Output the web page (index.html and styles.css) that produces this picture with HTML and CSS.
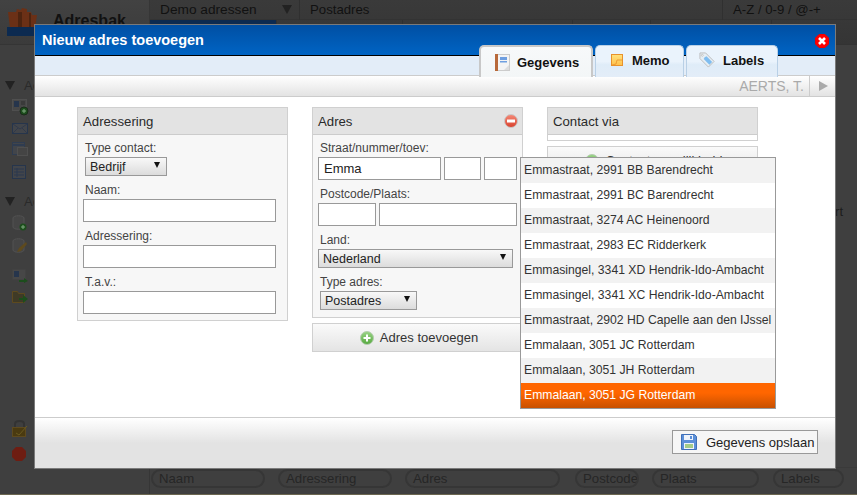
FILE: index.html
```html
<!DOCTYPE html>
<html lang="nl">
<head>
<meta charset="utf-8">
<title>Nieuw adres toevoegen</title>
<link rel="stylesheet" href="styles.css">
</head>
<body>
<div class="app">
  <aside class="side">
    <div class="brand">
      <svg class="logo" width="32" height="30" viewBox="0 0 32 30"><path fill="#6b3016" d="M1 5h8l1-3 4 1 1-2 5 1v3l4 0 1 3 5 0-2 13H3z"/><path fill="#4d2410" d="M11 5h4v15h-4zM22 6h2v14h-2z"/><rect y="20" x="0" width="32" height="9" fill="#0c2a50"/></svg>
      <span class="brand-name">Adresbak</span>
    </div>
    <div class="side-group first">
      <div class="side-title"><i class="tri"></i><span>Ac</span></div>
      <svg class="si" width="17" height="17" viewBox="0 0 17 17"><rect x=".5" y=".5" width="14" height="11" fill="#474747" stroke="#4f4f4f"/><rect x="2" y="2" width="5" height="6" fill="#26354c"/><path d="M9 3h4M9 5h4" stroke="#2f2f2f"/><circle cx="12" cy="12" r="4" fill="#1c4d1c" stroke="#1a2a1a"/><path d="M10 12h4M12 10v4" stroke="#7ea87e"/></svg>
      <svg class="si" width="17" height="12" viewBox="0 0 17 12"><rect x=".5" y=".5" width="15" height="10" fill="#42454a" stroke="#26354c"/><path d="M1 1l7 5 7-5M1 10l5-5M15 10l-5-5" stroke="#30394a" fill="none"/></svg>
      <svg class="si" width="17" height="16" viewBox="0 0 17 16"><rect x=".5" y=".5" width="12" height="12" fill="#42454a" stroke="#2f3c50"/><path d="M1 3h11" stroke="#2f3c50" stroke-width="2"/><rect x="5.500" y="5.500" width="10" height="8" fill="#444" stroke="#4f4f4f"/></svg>
      <svg class="si" width="14" height="15" viewBox="0 0 14 15"><rect x=".5" y=".5" width="13" height="13" fill="#42454a" stroke="#26354c"/><path d="M2 4h10M2 7h10M2 10h10M5 3v9" stroke="#2a384e"/></svg>
    </div>
    <div class="side-group">
      <div class="side-title"><i class="tri"></i><span>Ac</span></div>
      <svg class="si" width="15" height="16" viewBox="0 0 15 16"><path d="M1 3v9c0 3 11 3 11 0V3c0-3-11-3-11 0z" fill="#454545" stroke="#525252"/><circle cx="11" cy="12" r="3.500" fill="#1c4d1c"/><path d="M9 12h4M11 10v4" stroke="#7ea87e"/></svg>
      <svg class="si" width="16" height="16" viewBox="0 0 16 16"><path d="M1 3v9c0 3 11 3 11 0V3c0-3-11-3-11 0z" fill="#454545" stroke="#525252"/><path d="M5 14l2-4 7-6 1 2-6 7z" fill="#5e4a1e"/></svg>
      <svg class="si gap" width="16" height="14" viewBox="0 0 16 14"><rect x=".5" y=".5" width="13" height="10" fill="#474747"/><rect x="2" y="2" width="5" height="6" fill="#26354c"/><path d="M7 11h5V9l4 3-4 2v-1H7z" fill="#1c4d1c"/></svg>
      <svg class="si" width="16" height="15" viewBox="0 0 16 15"><path d="M.5 1.500h5l1 2h6v9H.5z" fill="#3f3a26" stroke="#5e4a1e"/><path d="M7 8h4V5l5 4-5 4v-3H7z" fill="#1c4d1c"/></svg>
    </div>
    <div class="side-foot">
      <svg class="si" width="16" height="17" viewBox="0 0 16 17"><path d="M3 7V4c0-4 9-4 9 0v3" fill="none" stroke="#333" stroke-width="2"/><rect x=".5" y="7.500" width="13" height="9" fill="#4a3a10" stroke="#5e4a1e"/><path d="M4 13l3 2 8-9" stroke="#6a5a20" fill="none"/></svg>
      <svg class="si" width="14" height="14" viewBox="0 0 14 14"><path d="M4 0h6l4 4v6l-4 4H4l-4-4V4z" fill="#6e1d12"/></svg>
    </div>
  </aside>
  <main class="main">
    <div class="top">
      <div class="top-tabs">
        <div class="top-tab active"><span>Demo adressen</span></div>
        <i class="tri top-tri"></i>
        <span class="top-second">Postadres</span>
        <span class="top-az">A-Z / 0-9 / @-+</span>
      </div>
      <div class="cols">
        <span class="col c1"></span><span class="col c2"></span><span class="col c3"></span><span class="col c4"></span><span class="col c5"></span>
      </div>
    </div>
    <div class="rows"><div class="row-text">rt</div></div>
    <div class="filters">
      <span class="pill p1">Naam</span>
      <span class="pill p2">Adressering</span>
      <span class="pill p3">Adres</span>
      <span class="pill p4">Postcode</span>
      <span class="pill p5">Plaats</span>
      <span class="pill p6">Labels</span>
    </div>
  </main>
</div>

<section class="modal">
  <header class="modal-head">
    <h1>Nieuw adres toevoegen</h1>
    <svg class="close" width="14" height="14" viewBox="0 0 14 14"><path d="M4 .5h6l3.500 3.500v6l-3.500 3.500h-6l-3.500-3.500v-6z" fill="#f00" stroke="#e00"/><path d="M4 4l6 6M10 4l-6 6" stroke="#fff" stroke-width="2.600"/></svg>
  </header>
  <div class="band"></div>
  <div class="crumb">
    <span class="crumb-name">AERTS, T.</span>
    <span class="crumb-next"><i></i></span>
  </div>
  <nav class="tabs">
    <div class="tab tab-on">
      <svg width="15" height="17" viewBox="0 0 15 17"><rect x="1" y=".5" width="13.500" height="16" fill="#f4f4f4" stroke="#ccc"/><rect x="0" y="0" width="3" height="17" fill="#b8693a"/><rect x="5" y="3" width="7" height="3" fill="#6f9fe0"/><rect x="5" y="7" width="7" height="1.500" fill="#6f9fe0"/><path d="M9 16l5-5v5z" fill="#ddd"/></svg>
      <span>Gegevens</span>
    </div>
    <div class="tab tab-memo">
      <svg width="12" height="12" viewBox="0 0 12 12"><defs><linearGradient id="memo" x1="0" y1="0" x2="0" y2="1"><stop offset="0" stop-color="#ffe27e"/><stop offset="1" stop-color="#ffc04a"/></linearGradient></defs><rect x=".5" y=".5" width="11" height="11" fill="url(#memo)" stroke="#e8922c"/><path d="M1 11l4-1 1-4h5" fill="none" stroke="#e8922c" stroke-width=".8"/></svg>
      <span>Memo</span>
    </div>
    <div class="tab tab-labels">
      <svg width="16" height="16" viewBox="0 0 17 17"><path d="M1 1h6l9 9-6 6-9-9z" fill="#e6eef4" stroke="#bbb"/><path d="M6 5.500l2-1 6 6-3 3-6-6z" fill="#7fbdf0"/><circle cx="3.500" cy="3.500" r="1" fill="#fff" stroke="#999" stroke-width=".5"/></svg>
      <span>Labels</span>
    </div>
  </nav>

  <div class="content">
    <div class="panel p-naming">
      <div class="panel-head">Adressering</div>
      <div class="panel-body">
        <label class="lab lab-ind">Type contact:</label>
        <div class="sel sel-type"><span>Bedrijf</span><i class="caret"></i></div>
        <label class="lab lab-ind">Naam:</label>
        <div class="inp inp-full"></div>
        <label class="lab lab-ind">Adressering:</label>
        <div class="inp inp-full"></div>
        <label class="lab lab-ind">T.a.v.:</label>
        <div class="inp inp-full"></div>
      </div>
    </div>

    <div class="col-adres">
      <div class="panel p-adres">
        <div class="panel-head">Adres
          <svg class="minus" width="14" height="14" viewBox="0 0 14 14"><defs><linearGradient id="red" x1="0" y1="0" x2="0" y2="1"><stop offset="0" stop-color="#f58a78"/><stop offset="1" stop-color="#d8402c"/></linearGradient></defs><circle cx="7" cy="7" r="6.500" fill="url(#red)" stroke="#c9c9c9"/><rect x="3" y="5.500" width="8" height="3" fill="#fff"/></svg>
        </div>
        <div class="panel-body">
          <label class="lab lab-ind">Straat/nummer/toev:</label>
          <div class="line">
            <div class="inp i-street">Emma</div><div class="inp i-num"></div><div class="inp i-add"></div>
          </div>
          <label class="lab lab-ind">Postcode/Plaats:</label>
          <div class="line">
            <div class="inp i-pc"></div><div class="inp i-city"></div>
          </div>
          <label class="lab lab-ind">Land:</label>
          <div class="sel sel-land"><span>Nederland</span><i class="caret"></i></div>
          <label class="lab lab-ind">Type adres:</label>
          <div class="sel sel-adres"><span>Postadres</span><i class="caret"></i></div>
        </div>
      </div>
      <div class="add-btn">
        <svg width="14" height="14" viewBox="0 0 14 14"><defs><linearGradient id="grn" x1="0" y1="0" x2="0" y2="1"><stop offset="0" stop-color="#9ad486"/><stop offset="1" stop-color="#55a83e"/></linearGradient></defs><circle cx="7" cy="7" r="6.500" fill="url(#grn)" stroke="#b5cdb0"/><path d="M3.500 7h7M7 3.500v7" stroke="#fff" stroke-width="2"/></svg>
        <span>Adres toevoegen</span>
      </div>
    </div>

    <div class="col-contact">
      <div class="panel p-contact">
        <div class="panel-head">Contact via</div>
        <div class="panel-stub"></div>
      </div>
      <div class="add-btn add-contact">
        <svg width="14" height="14" viewBox="0 0 14 14"><circle cx="7" cy="7" r="6.500" fill="url(#grn)" stroke="#b5cdb0"/><path d="M3.500 7h7M7 3.500v7" stroke="#fff" stroke-width="2"/></svg>
        <span>Contactmogelijkheid</span>
      </div>
    </div>
  </div>

  <ul class="suggest">
    <li>Emmastraat, 2991 BB Barendrecht</li>
    <li>Emmastraat, 2991 BC Barendrecht</li>
    <li>Emmastraat, 3274 AC Heinenoord</li>
    <li>Emmastraat, 2983 EC Ridderkerk</li>
    <li>Emmasingel, 3341 XD Hendrik-Ido-Ambacht</li>
    <li>Emmasingel, 3341 XC Hendrik-Ido-Ambacht</li>
    <li>Emmastraat, 2902 HD Capelle aan den IJssel</li>
    <li>Emmalaan, 3051 JC Rotterdam</li>
    <li>Emmalaan, 3051 JH Rotterdam</li>
    <li class="hit">Emmalaan, 3051 JG Rotterdam</li>
  </ul>

  <footer class="modal-foot">
    <div class="save">
      <svg width="16" height="16" viewBox="0 0 16 16"><path d="M.5.5h13l2 2v13H.5z" fill="#5b8fd8" stroke="#3f6fb8"/><rect x="3" y="1" width="9" height="5" fill="#eef3fb"/><rect x="9" y="2" width="2" height="3" fill="#5b8fd8"/><rect x="3" y="9" width="10" height="6" fill="#eef3fb"/><path d="M4 11h8M4 13h8" stroke="#8cc063" stroke-width="1.500"/></svg>
      <span>Gegevens opslaan</span>
    </div>
  </footer>
</section>
</body>
</html>
```
FILE: styles.css
```css
* { box-sizing: border-box; }
html, body { margin: 0; padding: 0; }
body {
  width: 857px;
  height: 495px;
  overflow: hidden;
  position: relative;
  font-family: "Liberation Sans", Arial, sans-serif;
  background: #3f3f3f;
  color: #222;
}

/* dimmed application behind the dialog */
.app {
  display: grid;
  grid-template-columns: 150px 1fr;
  height: 495px;
  border-bottom: 1px solid #6b6650;
}
.side {
  display: flex;
  flex-direction: column;
  border-right: 1px solid #363636;
  background: #3f3f3f;
}
.brand {
  height: 45px;
  display: flex;
  align-items: flex-start;
  gap: 14px;
  padding: 7px 0 0 7px;
  background: linear-gradient(#424242, #3b3b3b);
  border-bottom: 1px solid #353535;
}
.brand-name { font-size: 16px; font-weight: bold; color: #111; margin-top: 5px; }
.logo { display: block; }
.side-group { display: flex; flex-direction: column; align-items: flex-start; padding-left: 12px; }
.side-group.first { margin-top: 32px; }
.side-group + .side-group { margin-top: 6px; }
.side-title { display: flex; align-items: center; gap: 9px; margin-left: -7px; height: 16px; font-size: 13px; color: #2a2a2a; margin-bottom: 6px; }
.tri { display: block; width: 0; height: 0; border-left: 5px solid transparent; border-right: 5px solid transparent; border-top: 9px solid #222; }
.si { display: block; margin-bottom: 7px; }
.si.gap { margin-top: 8px; }
.side-foot { margin-top: auto; padding: 0 0 23px 12px; display: flex; flex-direction: column; }
.side-foot .si { margin-bottom: 10px; }

.main { display: flex; flex-direction: column; min-width: 0; }
.top { background: linear-gradient(#3a3a3a, #353535); height: 45px; border-bottom: 1px solid #333; }
.top-tabs { height: 20px; display: flex; align-items: center; font-size: 13.200px; color: #111; border-bottom: 1px solid #333; }
.top-tab { width: 127px; padding-left: 10px; font-size: 13.700px; white-space: nowrap; }
.top-tri { margin-left: 5px; border-top-color: #222; }
.top-second { margin-left: 7px; padding-left: 10px; border-left: 1px solid #303030; height: 20px; line-height: 19px; }
.top-az { margin-left: auto; width: 135px; padding-left: 10px; border-left: 1px solid #303030; height: 20px; line-height: 19px; }
.cols { height: 24px; display: flex; }
.col { display: block; height: 24px; border-right: 1px solid #303030; }
.c1 { width: 127px; background: linear-gradient(#0c2a50 4px, transparent 4px); }
.c2 { width: 126px; }
.c3 { width: 170px; }
.c4 { width: 78px; }
.c5 { width: 121px; }
.rows { flex: 1; padding-top: 159px; background: #3f3f3f; }
.row-text { font-size: 13px; color: #1c1c1c; text-align: right; padding-right: 14px; }
.filters { height: 27px; border-top: 1px solid #3a3a3a; display: flex; padding: 1px 0 0 1px; background: #3f3f3f; }
.pill { display: block; height: 19px; line-height: 16px; border: 2px solid #363636; border-radius: 10px; padding-left: 6px; font-size: 13.200px; color: #262626; margin-right: 13px; overflow: hidden; white-space: nowrap; }
.p1 { width: 114px; }
.p2 { width: 114px; }
.p3 { width: 155px; margin-right: 15px; }
.p4 { width: 64px; }
.p5 { width: 107px; margin-right: 14px; }
.p6 { width: 71px; }

/* dialog */
.modal {
  position: absolute;
  left: 34px;
  top: 24px;
  width: 802px;
  height: 445px;
  border: 1px solid #7a7a7a;
  background: #fff;
  display: flex;
  flex-direction: column;
}
.modal-head {
  height: 31px;
  flex: none;
  background: linear-gradient(#004fa3, #0064c4);
  border-bottom: 1px solid #000;
  display: flex;
  align-items: center;
  justify-content: space-between;
  padding: 0 6px 0 7px;
}
.modal-head h1 { margin: 0; font-size: 14.500px; font-weight: bold; color: #fff; }
.close { display: block; margin-top: 1px; }
.band { height: 20px; flex: none; background: #e3edf8; border-bottom: 1px solid #ccc; }
.crumb {
  height: 21px;
  flex: none;
  background: linear-gradient(#fff, #e3e3e3);
  border-bottom: 1px solid #ccc;
  display: flex;
  justify-content: flex-end;
  align-items: center;
  font-size: 14px;
  color: #aaa;
}
.crumb-name { padding-right: 5px; }
.crumb-next { width: 26px; height: 20px; border-left: 1px solid #ccc; display: flex; align-items: center; justify-content: center; }
.crumb-next i { display: block; width: 0; height: 0; border-top: 5px solid transparent; border-bottom: 5px solid transparent; border-left: 9px solid #aaa; margin-left: 1px; }

.tabs { position: absolute; left: 444px; top: 20px; height: 32px; display: flex; gap: 2px; font-size: 13px; font-weight: bold; color: #111; }
.tab {
  height: 32px;
  display: flex;
  align-items: center;
  border: 1px solid #b9d0e6;
  border-bottom: 0;
  border-radius: 5px 5px 0 0;
  background: linear-gradient(#eaf3fc 0, #eaf3fc 50%, #dfecf8 60%, #e3edf8 100%);
  padding-bottom: 3px;
}
.tab-on {
  width: 114px;
  border: 2px solid #c8c8c8;
  border-bottom: 0;
  padding-left: 14px;
  gap: 7px;
  background: linear-gradient(#f7f9fa, #f3f6f7);
  padding-bottom: 0;
}
.tab-memo { width: 89px; padding-left: 15px; gap: 9px; }
.tab-labels { width: 92px; padding-left: 12px; gap: 8px; }
.tab-on svg, .tab-memo svg, .tab-labels svg { display: block; flex: none; }

.content { flex: 1; display: flex; gap: 24px; padding: 10px 0 0 42px; min-height: 0; }
.panel { width: 211px; border: 1px solid #d0d0d0; background: #f7f7f7; }
.panel-head {
  height: 27px;
  background: #e3e3e3;
  border-bottom: 1px solid #ccc;
  font-size: 13.200px;
  line-height: 27px;
  padding-left: 5px;
  color: #2a2a2a;
  position: relative;
}
.minus { position: absolute; right: 4px; top: 6px; }
.panel-body { padding: 6px 5px 0 5px; }
.lab { display: block; font-size: 12px; line-height: 15px; color: #444; white-space: nowrap; }
.lab-ind { padding-left: 2px; }
.inp { height: 23px; border: 1px solid #999; background: #fff; font-size: 13px; line-height: 21px; padding-left: 5px; color: #222; }
.inp-full { width: 193px; margin: 1px 0 7px; }
.sel {
  height: 19px;
  border: 1px solid #999;
  background: linear-gradient(#f8f8f8, #dcdcdc);
  display: flex;
  align-items: center;
  justify-content: space-between;
  font-size: 12.500px;
  padding: 0 6px 0 4px;
  color: #222;
}
.caret { display: block; width: 0; height: 0; border-left: 3px solid transparent; border-right: 3px solid transparent; border-top: 6px solid #111; margin-bottom: 3px; }
.sel-type { width: 82px; margin: 1px 0 7px 2px; }
.p-naming { height: 214px; }
.col-adres, .col-contact { width: 211px; display: flex; flex-direction: column; }
.p-adres { height: 211px; }
.line { display: flex; gap: 3px; margin: 1px 0 7px; }
.i-street { width: 123px; }
.i-num { width: 37px; }
.i-add { width: 33px; }
.i-pc { width: 58px; }
.i-city { width: 138px; }
.sel-land { width: 195px; margin: 1px 0 7px; }
.sel-adres { width: 97px; margin: 1px 0 0 2px; }
.add-btn {
  height: 29px;
  margin-top: 5px;
  border: 1px solid #d0d0d0;
  background: linear-gradient(#fafafa, #e4e4e4);
  display: flex;
  align-items: center;
  justify-content: center;
  gap: 6px;
  padding-left: 3px;
  font-size: 13px;
  color: #333;
}
.add-btn svg { display: block; }
.p-contact { height: 34px; }
.p-contact .panel-stub { height: 5px; background: #fff; }
.add-contact { margin-top: 5px; }

.suggest {
  position: absolute;
  left: 485px;
  top: 132px;
  width: 256px;
  margin: 0;
  padding: 0;
  list-style: none;
  border: 1px solid #999;
  background: #fff;
  font-size: 12.200px;
}
.suggest li { height: 25px; line-height: 25px; padding-left: 3px; color: #333; white-space: nowrap; overflow: hidden; }
.suggest li:nth-child(odd) { background: #f2f2f2; }
.suggest li.hit { background: linear-gradient(#ff6600, #ff6600 40%, #c85000); color: #fff; }

.modal-foot {
  height: 51px;
  flex: none;
  border-top: 1px solid #ccc;
  background: linear-gradient(#fff, #e3e3e3 50%);
  display: flex;
  justify-content: flex-end;
  align-items: flex-start;
  padding: 12px 17px 0 0;
}
.save {
  width: 146px;
  height: 24px;
  border: 1px solid #999;
  background: #f6f6f6;
  display: flex;
  align-items: center;
  padding-left: 8px;
  gap: 9px;
  font-size: 13px;
  color: #222;
  white-space: nowrap;
}
.save svg { display: block; flex: none; }
```
